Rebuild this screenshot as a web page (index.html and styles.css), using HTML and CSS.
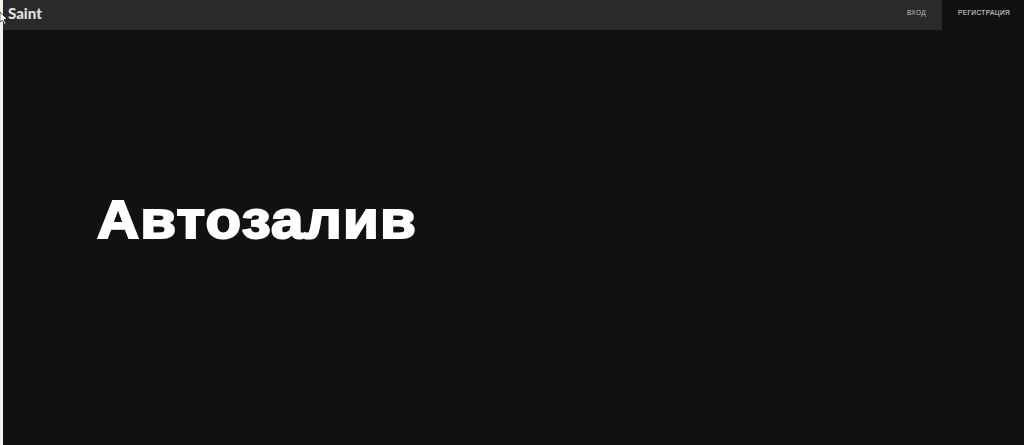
FILE: index.html
```html
<!DOCTYPE html>
<html lang="ru">
<head>
  <meta charset="UTF-8">
  <title>Saint</title>
  <link rel="stylesheet" href="styles.css">
</head>
<body>
  <div class="strip"></div>
  <div class="page">
    <header class="header">
      <div class="nav-left">
        <span class="logo">Saint</span>
        <a class="nav-link" href="#">Вход</a>
      </div>
      <a class="nav-link register" href="#">Регистрация</a>
    </header>
    <main class="hero">
      <h1 class="title">Автозалив</h1>
    </main>
  </div>
  <!-- курсор поверх шапки -->
  <svg class="cursor" width="8" height="13" viewBox="0 0 8 13">
    <path d="M0 0 L7 7 L4 7.500 L6 12 L4.500 12.500 L2.500 8 L0 10 Z" fill="#fff" stroke="#000" stroke-width="0.6"/>
  </svg>
</body>
</html>
```
FILE: styles.css
```css
html, body {
  height: 100%;
}

body {
  margin: 0;
  display: flex;
  background-color: #111111;
  color: white;
  font-family: "Liberation Sans", Arial, sans-serif;
  overflow: hidden;
}

.strip {
  width: 3px;
  background-color: #f2f2f2;
}

.page {
  flex: 1;
  display: flex;
  flex-direction: column;
}

.header {
  display: flex;
  height: 30px;
}

.nav-left {
  flex: 1;
  display: flex;
  align-items: center;
  justify-content: space-between;
  padding: 0 16px 5px 5px;
  background-color: #2a2a2a;
}

.logo {
  font-family: Lato, sans-serif;
  font-size: 15px;
  font-weight: 900;
  color: #e0e0e0;
}

.nav-link {
  font-size: 6.500px;
  letter-spacing: 0.4px;
  text-transform: uppercase;
  text-decoration: none;
  color: #c0c0c0;
}

.register {
  width: 80px;
  padding: 0 0 6px 2px;
  display: flex;
  align-items: center;
  justify-content: center;
  color: #e4e4e4;
}

.hero {
  flex: 1;
  padding: 157px 0 0 94px;
}

.title {
  width: fit-content;
  margin: 0;
  font-size: 53px;
  font-weight: 700;
  line-height: 66px;
  letter-spacing: 1.1px;
  -webkit-text-stroke: 2px white;
  transform: scaleX(1.1);
  transform-origin: left;
}

.cursor {
  position: absolute;
  left: 0;
  top: 12px;
}
```
